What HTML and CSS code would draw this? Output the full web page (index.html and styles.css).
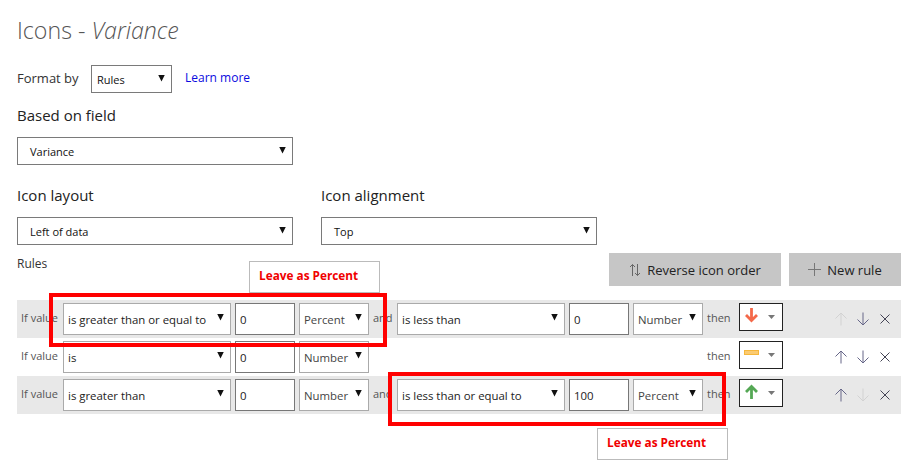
FILE: index.html
```html
<!DOCTYPE html>
<html lang="en">
<head>
<meta charset="utf-8">
<title>Icons - Variance</title>
<link rel="stylesheet" href="styles.css">
</head>
<body>
<svg class="defs" width="0" height="0" aria-hidden="true">
  <symbol id="up" viewBox="0 0 14 14"><path d="M7 13.500V1M1.500 6.500L7 1l5.500 5.500" fill="none" stroke="currentColor" stroke-width="1"/></symbol>
  <symbol id="down" viewBox="0 0 14 14"><path d="M7 .5V13M1.500 7.500L7 13l5.500-5.500" fill="none" stroke="currentColor" stroke-width="1"/></symbol>
  <symbol id="close" viewBox="0 0 14 14"><path d="M2.500 2.500l9 9M11.500 2.500l-9 9" fill="none" stroke="currentColor" stroke-width="1"/></symbol>
</svg>
<main class="page">
  <h1 class="title">Icons - <em>Variance</em></h1>
  <div class="format-row">
    <span class="format-label">Format by</span>
    <div class="select select-format"><span>Rules</span><i class="caret"></i></div>
    <a class="learn" href="#">Learn more</a>
  </div>
  <h2 class="label label-field">Based on field</h2>
  <div class="select select-wide"><span>Variance</span><i class="caret"></i></div>
  <div class="two-col">
    <div class="col">
      <h2 class="label">Icon layout</h2>
      <div class="select select-wide"><span>Left of data</span><i class="caret"></i></div>
    </div>
    <div class="col">
      <h2 class="label">Icon alignment</h2>
      <div class="select select-wide"><span>Top</span><i class="caret"></i></div>
    </div>
  </div>
  <div class="rules-head">
    <span class="rules-label">Rules</span>
    <div class="actions">
      <button class="btn btn-reverse"><svg viewBox="0 0 12 14" width="12" height="14"><path d="M3.500 13V1.500M1 4l2.500-2.500L6 4M8.500 1v11.500M6 10l2.500 2.500L11 10" fill="none" stroke="#666" stroke-width="1"/></svg>Reverse icon order</button>
      <button class="btn btn-new"><svg viewBox="0 0 13 13" width="13" height="13"><path d="M6.500 0v13M0 6.500h13" stroke="#777" stroke-width="1"/></svg>New rule</button>
    </div>
  </div>
  <div class="rules">
    <div class="rule rule-grey">
      <span class="ifv">If value</span>
      <div class="cell-sel"><span>is greater than or equal to</span><i class="caret"></i></div>
      <div class="cell-in">0</div>
      <div class="cell-unit"><span>Percent</span><i class="caret"></i></div>
      <span class="and">and</span>
      <div class="cell-sel"><span>is less than</span><i class="caret"></i></div>
      <div class="cell-in">0</div>
      <div class="cell-unit"><span>Number</span><i class="caret"></i></div>
      <span class="then">then</span>
      <div class="icon-pick">
        <svg viewBox="0 0 15 15" width="15" height="15"><path d="M7.500 0v12.500M2 7l5.500 5.500L13 7" fill="none" stroke="#f4694a" stroke-width="2.800"/></svg>
        <i class="mini-caret"></i>
      </div>
      <div class="tools">
        <svg class="t-off"><use href="#up"/></svg>
        <svg class="t-on"><use href="#down"/></svg>
        <svg class="t-x"><use href="#close"/></svg>
      </div>
    </div>
    <div class="rule">
      <span class="ifv">If value</span>
      <div class="cell-sel"><span>is</span><i class="caret"></i></div>
      <div class="cell-in">0</div>
      <div class="cell-unit"><span>Number</span><i class="caret"></i></div>
      <span class="spacer"></span>
      <span class="then">then</span>
      <div class="icon-pick">
        <svg viewBox="0 0 15 15" width="15" height="15"><rect x="0.500" y="4.500" width="14" height="4" fill="#fbcb72" stroke="#f6b73c"/></svg>
        <i class="mini-caret"></i>
      </div>
      <div class="tools">
        <svg class="t-on"><use href="#up"/></svg>
        <svg class="t-on"><use href="#down"/></svg>
        <svg class="t-x"><use href="#close"/></svg>
      </div>
    </div>
    <div class="rule rule-grey">
      <span class="ifv">If value</span>
      <div class="cell-sel"><span>is greater than</span><i class="caret"></i></div>
      <div class="cell-in">0</div>
      <div class="cell-unit"><span>Number</span><i class="caret"></i></div>
      <span class="and">and</span>
      <div class="cell-sel"><span>is less than or equal to</span><i class="caret"></i></div>
      <div class="cell-in">100</div>
      <div class="cell-unit"><span>Percent</span><i class="caret"></i></div>
      <span class="then">then</span>
      <div class="icon-pick">
        <svg viewBox="0 0 15 15" width="15" height="15"><path d="M7.500 15V2.500M2 8l5.500-5.500L13 8" fill="none" stroke="#55a855" stroke-width="2.800"/></svg>
        <i class="mini-caret"></i>
      </div>
      <div class="tools">
        <svg class="t-on"><use href="#up"/></svg>
        <svg class="t-off"><use href="#down"/></svg>
        <svg class="t-x"><use href="#close"/></svg>
      </div>
    </div>
  </div>
  <div class="note note-a">Leave as Percent</div>
  <div class="mark mark-a"></div>
  <div class="mark mark-b"></div>
  <div class="note note-b">Leave as Percent</div>
</main>
</body>
</html>
```
FILE: styles.css
```css
* { box-sizing: border-box; }
html, body { margin: 0; background: #fff; }
body {
  width: 918px;
  height: 469px;
  overflow: hidden;
  font-family: "Open Sans", "Noto Sans", sans-serif;
  color: #222;
}
.defs { position: absolute; }
.page { position: relative; height: 469px; padding: 16px 17px 0; }
.title {
  margin: 0;
  height: 29px;
  font-size: 23.200px;
  line-height: 29px;
  font-weight: 300;
  color: #555;
}
.title em { font-style: italic; }
.format-row {
  display: flex;
  align-items: center;
  margin-top: 20px;
  height: 28px;
}
.format-label { font-size: 13px; width: 74px; color: #333; margin-top: -3px; }
.select {
  display: flex;
  align-items: center;
  justify-content: space-between;
  border: 1px solid #7a7a7a;
  height: 28px;
  font-size: 11px;
  color: #111;
  background: #fff;
}
.caret {
  display: block;
  flex: none;
  width: 7px;
  height: 7px;
  background: #111;
  clip-path: polygon(0 0, 100% 0, 50% 100%);
}
.select-format { width: 81px; padding: 0 6px 0 5px; }
.select-format .caret { margin-top: -2px; }
.learn { margin-left: 13px; font-size: 12px; color: #0a0ae0; text-decoration: none; margin-top: -3px; }
.label { margin: 0; font-weight: 400; font-size: 15px; line-height: 20px; color: #222; }
.label-field { margin-top: 12px; }
.select-wide { width: 276px; margin-top: 12px; padding: 0 6px 0 12px; }
.select-wide .caret { margin-top: -2px; }
.two-col { display: flex; gap: 28px; margin-top: 20px; }
.col { width: 276px; }
.rules-head {
  display: flex;
  justify-content: space-between;
  height: 47px;
  margin-top: 8px;
}
.rules-label { font-size: 12px; line-height: 20px; color: #333; padding-top: 1px; }
.actions { display: flex; gap: 8px; height: 33px; }
.btn {
  display: flex;
  align-items: center;
  justify-content: center;
  gap: 6px;
  border: 0;
  padding: 0;
  background: #c6c6c6;
  color: #222;
  font: 400 13px "Open Sans", sans-serif;
}
.btn-reverse { width: 172px; }
.btn-new { width: 112px; }
.rules { width: 884px; }
.rule {
  display: flex;
  align-items: center;
  height: 38px;
  padding-left: 4px;
  font-size: 11.500px;
}
.rule-grey { background: #e8e8e8; }
.ifv { width: 42px; color: #555; margin-top: -4px; font-size: 11px; }
.cell-sel, .cell-unit, .cell-in {
  display: flex;
  align-items: center;
  justify-content: space-between;
  height: 32px;
  background: #fff;
  border: 1px solid #aaa;
  font-size: 11.400px;
  color: #222;
  padding-left: 4px;
}
.cell-sel { width: 168px; padding-right: 6px; }
.cell-sel .caret, .cell-unit .caret { margin-top: -4px; }
.cell-in { width: 60px; margin-left: 4px; border-color: #777; }
.cell-unit { width: 70px; margin-left: 4px; padding-right: 6px; color: #444; }
.and { width: 28px; padding-left: 4px; color: #555; font-size: 11px; margin-top: -4px; }
.spacer { width: 334px; }
.then { width: 36px; padding-left: 4px; color: #555; font-size: 11px; margin-top: -4px; }
.icon-pick {
  display: flex;
  align-items: center;
  gap: 9px;
  width: 44px;
  height: 28px;
  margin-top: -4px;
  padding-left: 4px;
  border: 1px solid #222;
  background: #fff;
}
.icon-pick svg { display: block; flex: none; margin-top: -3px; }
.mini-caret {
  display: block;
  width: 7px;
  height: 4px;
  background: #777;
  clip-path: polygon(0 0, 100% 0, 50% 100%);
}
.tools { display: flex; gap: 8px; margin-left: 51px; align-items: center; }
.tools svg { display: block; width: 14px; height: 14px; }
.t-off { color: #d2d2d2; }
.t-on { color: #668; }
.t-x { color: #445; }
.note {
  position: absolute;
  width: 131px;
  height: 32px;
  padding-left: 9px;
  border: 1px solid #bbb;
  background: #fff;
  color: #f00000;
  font-weight: 700;
  font-size: 11.800px;
  line-height: 26px;
}
.note-a { left: 249px; top: 261px; }
.note-b { left: 597px; top: 428px; }
.mark { position: absolute; width: 338px; height: 54px; border: 4px solid #f00; }
.mark-a { left: 49px; top: 293px; }
.mark-b { left: 388px; top: 372px; }
```
